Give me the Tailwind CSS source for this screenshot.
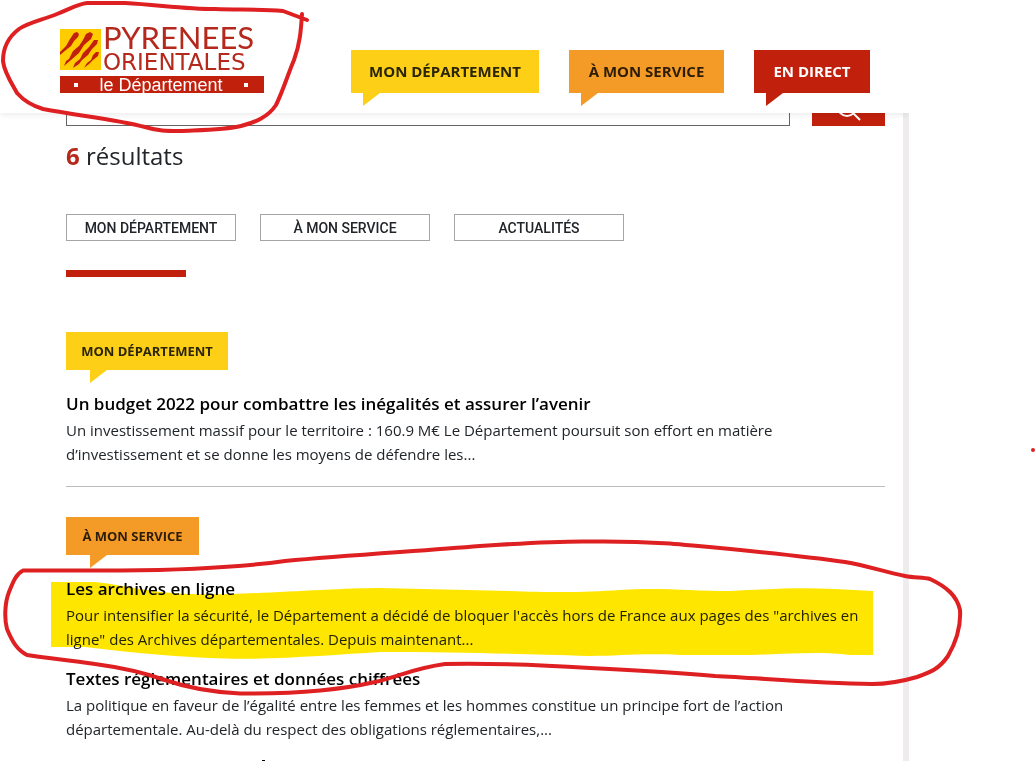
<!DOCTYPE html>
<html lang="fr">
<head>
    <meta charset="UTF-8">
    <meta name="viewport" content="width=device-width, initial-scale=1.0">
    <title>Recherche - Pyrénées-Orientales le Département</title>
    <script src="https://cdn.jsdelivr.net/npm/@tailwindcss/browser@4"></script>
</head>
<body class="bg-white">
<div class="relative h-screen overflow-hidden font-['Open_Sans',sans-serif] text-[#212529]">
    <div class="mr-[127px] flex h-full flex-col overflow-hidden">

        <!-- Header -->
        <header class="relative z-10 flex h-[113px] shrink-0 bg-white pl-[59px] shadow-[0_2px_6px_rgba(0,0,0,0.08)]">
            <a href="/" aria-label="Pyrénées Orientales le Département" class="mt-[16px] h-[78px] w-[206px] shrink-0">
                <svg width="206" height="78" viewBox="0 -10 206 78">
                    <rect x="1" y="3" width="41" height="41" fill="#ffcc00"/>
                    <g fill="#c1200d">
                        <path d="M15 7l3-1 2 2-1 3-4 4-3 5-5 4-6 5v-3l6-6 4-7z"/>
                        <path d="M27 8l4-2 3 2-2 5-7 6-5 8-8 7-7 6 2-5 3-2 4-8 6-5 4-6z"/>
                        <path d="M35 14l4 0-1 4-5 5-4 6-6 5-3 4-6 4 2-5 5-4 3-6 6-6z"/>
                        <path d="M37 26l3 0-1 4-5 4-4 4-5 4 3-5 4-3 2-5z"/>
                        <rect x="1" y="50" width="204" height="17"/>
                    </g>
                    <g fill="#b5281c">
                        <text x="44" y="23" font-size="31" font-family="Lato, sans-serif">PYRENEES</text>
                        <text x="44" y="44" font-size="23" font-family="DejaVu Sans, sans-serif">ORIENTALES</text>
                    </g>
                    <text x="102" y="65" font-size="18" fill="#fff" text-anchor="middle" font-family="Liberation Sans, sans-serif">le Département</text>
                    <path d="M15 57h4v4h-4zM185 57h4v4h-4z" fill="#fff"/>
                </svg>
            </a>
            <nav class="mt-[50px] ml-[86px] flex items-start gap-[30px] text-[15px] leading-[43px] font-bold whitespace-nowrap">
                <a href="#" class="relative w-[188px] bg-[#fdd017] text-center text-[#2b2508]">MON DÉPARTEMENT
                    <svg class="absolute top-full left-3" width="17" height="13"><path d="M0 0h17L0 13z" fill="#fdd017"/></svg>
                </a>
                <a href="#" class="relative w-[155px] bg-[#f49b27] text-center text-[#2d1d08]">À MON SERVICE
                    <svg class="absolute top-full left-3" width="17" height="13"><path d="M0 0h17L0 13z" fill="#f49b27"/></svg>
                </a>
                <a href="#" class="relative w-[116px] bg-[#c1200d] text-center text-white">EN DIRECT
                    <svg class="absolute top-full left-3" width="17" height="13"><path d="M0 0h17L0 13z" fill="#c1200d"/></svg>
                </a>
            </nav>
        </header>

        <main class="grow border-r-[6px] border-[#eeecec] pr-[18px] pl-[66px]">
            <!-- Search form, scrolled under the header -->
            <form class="flex h-[13px] items-end gap-[22px] overflow-hidden">
                <input type="search" aria-label="Rechercher" class="h-[42px] min-w-0 grow border border-[#666] bg-white px-3">
                <button type="button" aria-label="Lancer la recherche" class="flex h-[42px] w-[73px] shrink-0 justify-center bg-[#c1200d]">
                    <svg class="mt-3" width="26" height="26" viewBox="0 0 26 26" fill="none" stroke="#fff" stroke-width="2">
                        <circle cx="11" cy="11" r="9"/>
                        <path d="M17 17l7 7"/>
                    </svg>
                </button>
            </form>

            <h1 class="mt-[14px] text-2xl"><strong class="font-bold text-[#b5281c]">6</strong> résultats</h1>

            <div class="mt-[42px] flex gap-6 font-['Roboto',sans-serif] text-sm font-medium">
                <button type="button" class="h-[27px] w-[170px] border border-[#a5a5a5]">MON DÉPARTEMENT</button>
                <button type="button" class="h-[27px] w-[170px] border border-[#a5a5a5]">À MON SERVICE</button>
                <button type="button" class="h-[27px] w-[170px] border border-[#a5a5a5]">ACTUALITÉS</button>
            </div>
            <div class="mt-[29px] h-[7px] w-[120px] bg-[#c1200d]"></div>

            <!-- Mon Département -->
            <section class="mt-[55px] border-b border-[#bcbcbc] pb-5">
                <h2 class="relative w-[162px] bg-[#fdd017] text-center text-[13px] leading-[38px] font-bold text-[#2b2508]">MON DÉPARTEMENT
                    <svg class="absolute top-full left-6" width="17" height="13"><path d="M0 0h17L0 13z" fill="#fdd017"/></svg>
                </h2>
                <article class="mt-[22px]">
                    <h3 class="text-[17px] leading-6 font-semibold text-black"><a href="#">Un budget 2022 pour combattre les inégalités et assurer l’avenir</a></h3>
                    <p class="mt-[2px] text-[15px] leading-6">Un investissement massif pour le territoire : 160.9 M€ Le Département poursuit son effort en matière<br>d’investissement et se donne les moyens de défendre les...</p>
                </article>
            </section>

            <!-- À mon service -->
            <section class="mt-[30px]">
                <h2 class="relative w-[133px] bg-[#f49b27] text-center text-[13px] leading-[38px] font-bold text-[#2d1d08]">À MON SERVICE
                    <svg class="absolute top-full left-6" width="17" height="13"><path d="M0 0h17L0 13z" fill="#f49b27"/></svg>
                </h2>
                <article class="mt-[22px]">
                    <h3 class="text-[17px] leading-6 font-semibold text-black"><a href="#">Les archives en ligne</a></h3>
                    <p class="mt-[2px] text-[15px] leading-6">Pour intensifier la sécurité, le Département a décidé de bloquer l'accès hors de France aux pages des "archives en<br>ligne" des Archives départementales. Depuis maintenant...</p>
                </article>
                <article class="mt-4">
                    <h3 class="text-[17px] leading-6 font-semibold text-black"><a href="#">Textes réglementaires et données chiffrées</a></h3>
                    <p class="mt-[2px] text-[15px] leading-6">La politique en faveur de l’égalité entre les femmes et les hommes constitue un principe fort de l’action<br>départementale. Au-delà du respect des obligations réglementaires,...</p>
                </article>
            </section>
        </main>
    </div>

    <!-- Highlighter -->
    <svg class="pointer-events-none absolute top-0 left-0 z-20 mix-blend-multiply" width="1036" height="761" viewBox="0 0 1036 761">
        <path d="M51 582H95C130 586 150 593 190 594C240 596 330 588 380 588L510 591C560 593 590 592 620 590C660 587 690 591 730 591C770 589 800 587 835 589L873 591V655H850C820 651 790 654 750 655H680C640 653 620 656 590 656C510 654 460 652 380 652C330 655 260 661 210 658C150 655 110 650 85 647H51Z" fill="#ffe600"/>
    </svg>
    <!-- Red pen -->
    <svg class="pointer-events-none absolute top-0 left-0 z-20" width="1036" height="761" viewBox="0 0 1036 761" fill="none" stroke="#de2022" stroke-width="4" stroke-linecap="round" stroke-linejoin="round">
        <path d="M307 20L283 11C260 9 240 10 215 9C185 9 160 5 125 3H87C78 4 70 9 57 14C42 20 27 23 19 29C7 38 3 49 3 61C4 72 12 84 17 93C24 101 33 106 43 109C80 116 115 119 145 127C158 131 166 131 180 131C202 130 225 130 241 126C256 122 268 117 276 105C283 91 288 74 294 60C300 44 301 30 302 14"/>
        <path d="M23 570.500H120C170 570 235 568 285 561C350 555 420 551 480 546C525 543 560 541 590 541.500C625 541 645 542 670 543.500C730 549 790 554 845 562C868 566 885 572 905 576C915 578 923 577 930 579C947 587 957 596 960 610C961 625 956 642 948 656C939 669 931 672 917 677C900 682 888 684 872 684C810 683 760 678 715 676C670 672 630 670 590 668C540 665 490 663 445 664C415 668 400 676 375 682C340 690 290 694 240 693.500C210 692 185 687 165 680C145 673 125 668 95 664C70 660 45 658 27 655C17 650 12 641 7 629C4 618 5 602 9 592C13 582 16 574 23 570.500"/>
        <circle cx="1033" cy="450" r="1" stroke-width="2"/>
        <path d="M262 760h3v1h-3z" fill="#000" stroke="none"/>
    </svg>
</div>
</body>
</html>
